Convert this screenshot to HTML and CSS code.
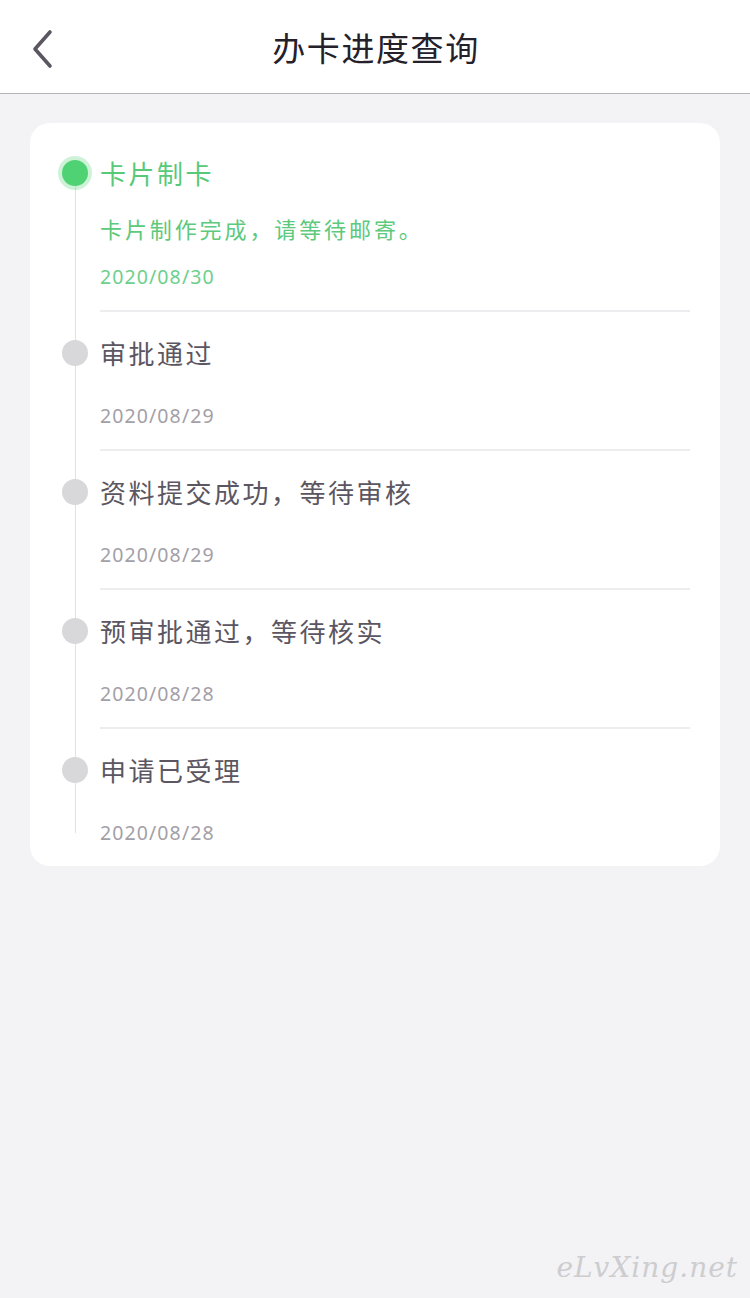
FILE: index.html
```html
<!DOCTYPE html>
<html lang="zh-CN">
<head>
<meta charset="utf-8">
<title>办卡进度查询</title>
<link rel="stylesheet" href="styles.css">
</head>
<body>
<header class="nav">
  <svg class="back" width="30" height="40" viewBox="0 0 30 40"><polyline points="20,3 5,20 20,37" fill="none" stroke="#5b5661" stroke-width="3.6" stroke-linecap="round" stroke-linejoin="round"/></svg>
  <h1 class="nav-title">办卡进度查询</h1>
</header>
<main class="card">
  <div class="step done">
    <span class="dot"></span>
    <div class="title">卡片制卡</div>
    <div class="desc">卡片制作完成，请等待邮寄。</div>
    <div class="date">2020/08/30</div>
  </div>
  <div class="step">
    <span class="dot"></span>
    <div class="title">审批通过</div>
    <div class="date">2020/08/29</div>
  </div>
  <div class="step">
    <span class="dot"></span>
    <div class="title">资料提交成功，等待审核</div>
    <div class="date">2020/08/29</div>
  </div>
  <div class="step">
    <span class="dot"></span>
    <div class="title">预审批通过，等待核实</div>
    <div class="date">2020/08/28</div>
  </div>
  <div class="step last">
    <span class="dot"></span>
    <div class="title">申请已受理</div>
    <div class="date">2020/08/28</div>
  </div>
</main>
<div class="watermark">eLvXing.net</div>
</body>
</html>
```
FILE: styles.css
```css
html, body {
  margin: 0;
  padding: 0;
}
body {
  width: 750px;
  height: 1298px;
  background: #f3f3f5;
  font-family: "Noto Sans CJK SC", "Noto Sans", sans-serif;
  position: relative;
  overflow: hidden;
}
.nav {
  height: 93px;
  background: #ffffff;
  border-bottom: 1px solid #b4b3b6;
  display: flex;
  align-items: center;
  justify-content: center;
  position: relative;
}
.back {
  position: absolute;
  left: 30px;
  top: 29px;
}
.nav-title {
  margin: 0 0 0 2px;
  font-size: 33px;
  font-weight: 400;
  color: #24212a;
  letter-spacing: 1.6px;
  line-height: 40px;
}
.card {
  position: relative;
  margin: 29px 30px 0;
  background: #ffffff;
  border-radius: 20px;
  padding: 9px 0 18px;
}
.card::before {
  content: "";
  position: absolute;
  left: 45px;
  top: 62px;
  bottom: 33px;
  width: 1px;
  background: #e2e2e4;
}
.step {
  position: relative;
  margin: 0 30px 0 70px;
  padding: 21px 0 18px;
  border-bottom: 2px solid #ededef;
}
.step.last {
  border-bottom: none;
  padding-bottom: 0;
}
.dot {
  position: absolute;
  left: -38px;
  top: 28px;
  width: 26px;
  height: 26px;
  border-radius: 50%;
  background: #d8d8da;
  z-index: 1;
}
.done .dot {
  background: #4fd274;
  box-shadow: 0 0 0 4px rgba(79, 210, 116, 0.28);
}
.title {
  font-size: 26px;
  line-height: 40px;
  letter-spacing: 2.5px;
  color: #5b5661;
}
.done .title {
  color: #58c979;
}
.desc {
  margin-top: 20px;
  font-size: 22px;
  line-height: 30px;
  letter-spacing: 2.9px;
  color: #5cc97c;
}
.date {
  margin-top: 28px;
  font-family: "Noto Sans", "Open Sans", sans-serif;
  font-size: 19.5px;
  line-height: 30px;
  letter-spacing: 1.1px;
  color: #a3a0a7;
}
.done .desc + .date {
  margin-top: 19px;
}
.done .date {
  color: #6cd08c;
}
.watermark {
  position: absolute;
  right: 12px;
  bottom: 14px;
  font-family: "DejaVu Serif", serif;
  font-style: italic;
  font-size: 28px;
  letter-spacing: 1px;
  color: #cdcdd0;
}
```
